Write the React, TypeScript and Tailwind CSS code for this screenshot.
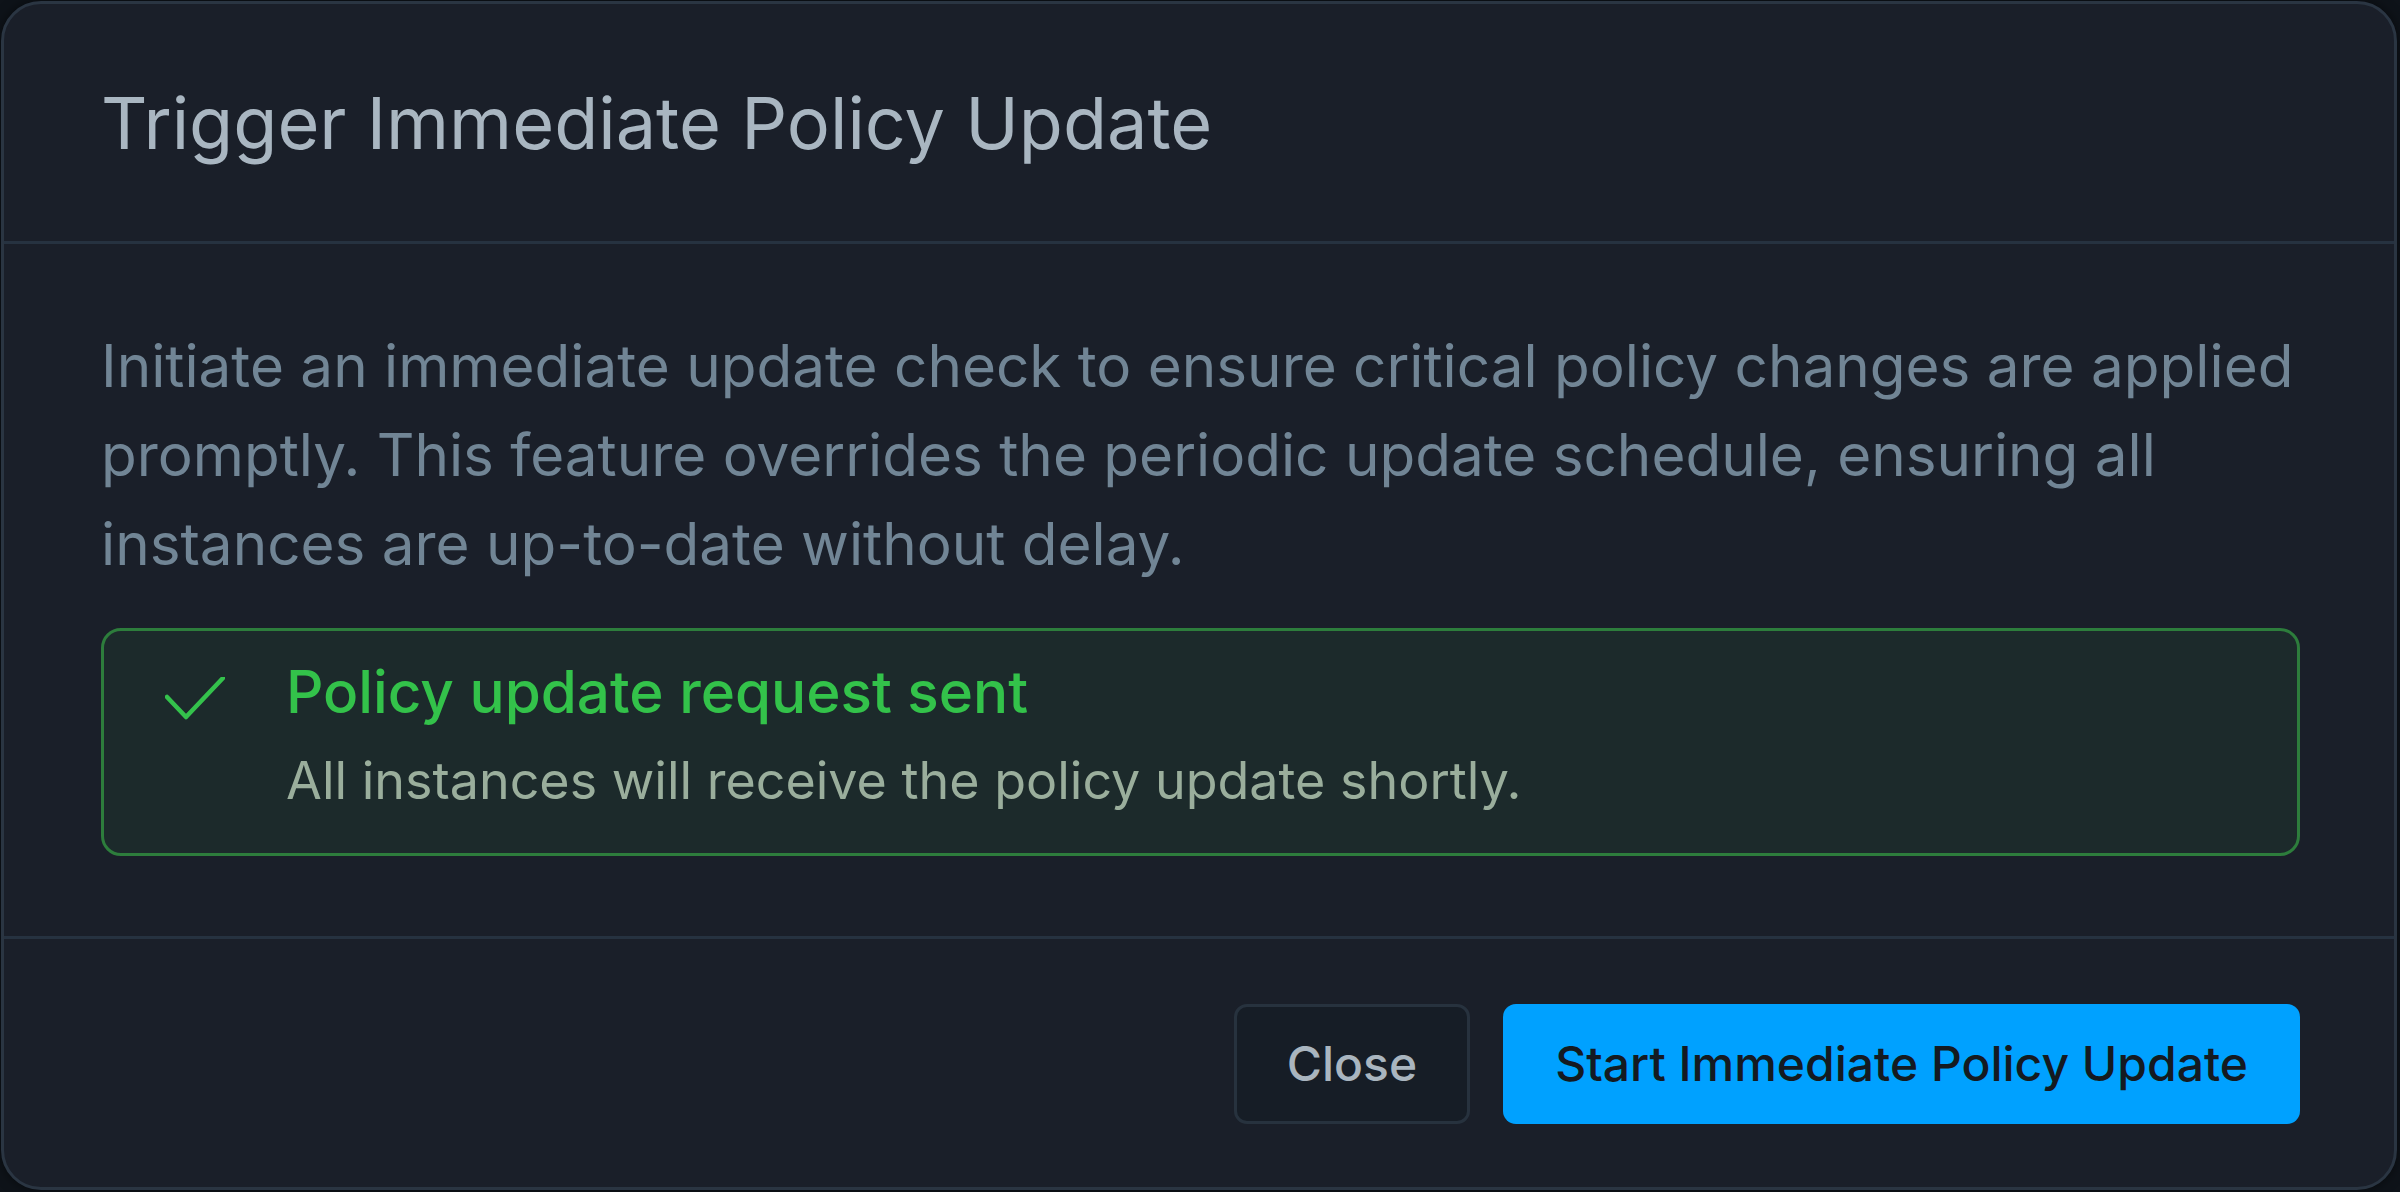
export default function App() {
  return (
    <div className="w-[2400px] h-[1192px] bg-[#0e1319] pl-[1px] pt-[1px] font-['Inter',_'Liberation_Sans',_sans-serif]">
      <div className="w-[2396px] h-[1189px] flex flex-col rounded-[40px] border-[3px] border-[#2a3542] bg-[#1a1f29] shadow-[0_0_12px_rgba(0,0,0,0.5)]">
        {/* Header */}
        <div className="h-[240px] flex items-center pl-[97px] pr-[94px] border-b-[3px] border-[#263240]">
          <h2 className="text-[72px] font-normal text-[#a9b6c1] leading-normal">Trigger Immediate Policy Update</h2>
        </div>

        {/* Body */}
        <div className="pl-[97px] pr-[94px] pt-[77px] pb-[80px] border-b-[3px] border-[#263240]">
          <p className="text-[58.4px] leading-[89px] text-[#718595]">
            Initiate an immediate update check to ensure critical policy changes are applied promptly. This feature
            overrides the periodic update schedule, ensuring all instances are up-to-date without delay.
          </p>

          <div className="mt-[40px] flex rounded-[20px] border-[3px] border-[#2d7d3c] bg-[#1c2a2b] pl-[63px] pr-[40px] pt-[19px] pb-[36px]">
            <div className="w-[57px] pt-[27px] flex-shrink-0">
              <svg width="60" height="44" viewBox="0 0 60 44" fill="none" className="-ml-[2px]">
                <polyline points="2,20 21,40 58,1" stroke="#34c24c" strokeWidth="4.5" strokeLinecap="round" strokeLinejoin="round" />
              </svg>
            </div>
            <div className="ml-[62px] flex flex-col gap-[11px]">
              <p className="text-[58.4px] leading-[84px] font-medium text-[#33c24a]">Policy update request sent</p>
              <p className="text-[52px] leading-[72px] text-[#9aae9c]">All instances will receive the policy update shortly.</p>
            </div>
          </div>
        </div>

        {/* Footer */}
        <div className="flex-1 flex items-start justify-end gap-[33px] pl-[97px] pr-[94px] pt-[65px]">
          <button className="h-[120px] px-[50px] rounded-[13px] border-[3px] border-[#27323e] bg-[#161d26] text-[48px] font-medium text-[#a9b5bf]">
            Close
          </button>
          <button className="h-[120px] px-[49px] rounded-[13px] border-[3px] border-transparent bg-[#00a1ff] text-[48px] font-medium text-[#141a21]">
            Start Immediate Policy Update
          </button>
        </div>
      </div>
    </div>
  );
}
